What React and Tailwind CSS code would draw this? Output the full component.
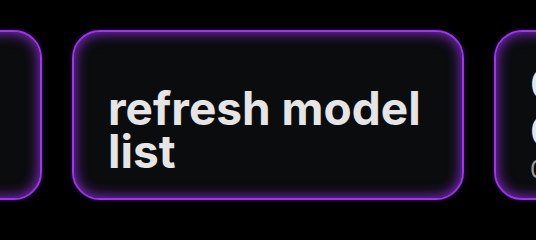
import React from "react";

const cards = [
  { title: "open settings", sub: null },
  { title: "refresh model list", sub: null },
  { title: "Clear Conversation", sub: "0 messages" },
];

function Card({ title, sub }) {
  return (
    <div
      className={`shrink-0 w-[392px] h-[170px] rounded-[28px] border-2 border-[#a032f2] bg-[#0b0c0e] shadow-[inset_0_0_14px_rgba(155,50,240,0.95),0_0_5px_rgba(150,50,235,0.35)] flex flex-col justify-end px-[34px] ${
        sub ? "pb-[13px]" : "pb-[25px]"
      }`}
    >
      <div
        className={`text-[46px] font-bold text-[#e5e5e5] ${
          sub ? "leading-[47px]" : "leading-[43px]"
        }`}
      >
        {title}
      </div>
      {sub && (
        <div className="text-[24px] leading-[30px] text-[#9c9c9c]">{sub}</div>
      )}
    </div>
  );
}

export default function App() {
  return (
    <div
      className="w-[536px] h-[240px] bg-black overflow-hidden flex justify-center gap-[30px] pt-[30px]"
      style={{ fontFamily: "Inter, 'Noto Sans', sans-serif" }}
    >
      {cards.map((c) => (
        <Card key={c.title} {...c} />
      ))}
    </div>
  );
}
